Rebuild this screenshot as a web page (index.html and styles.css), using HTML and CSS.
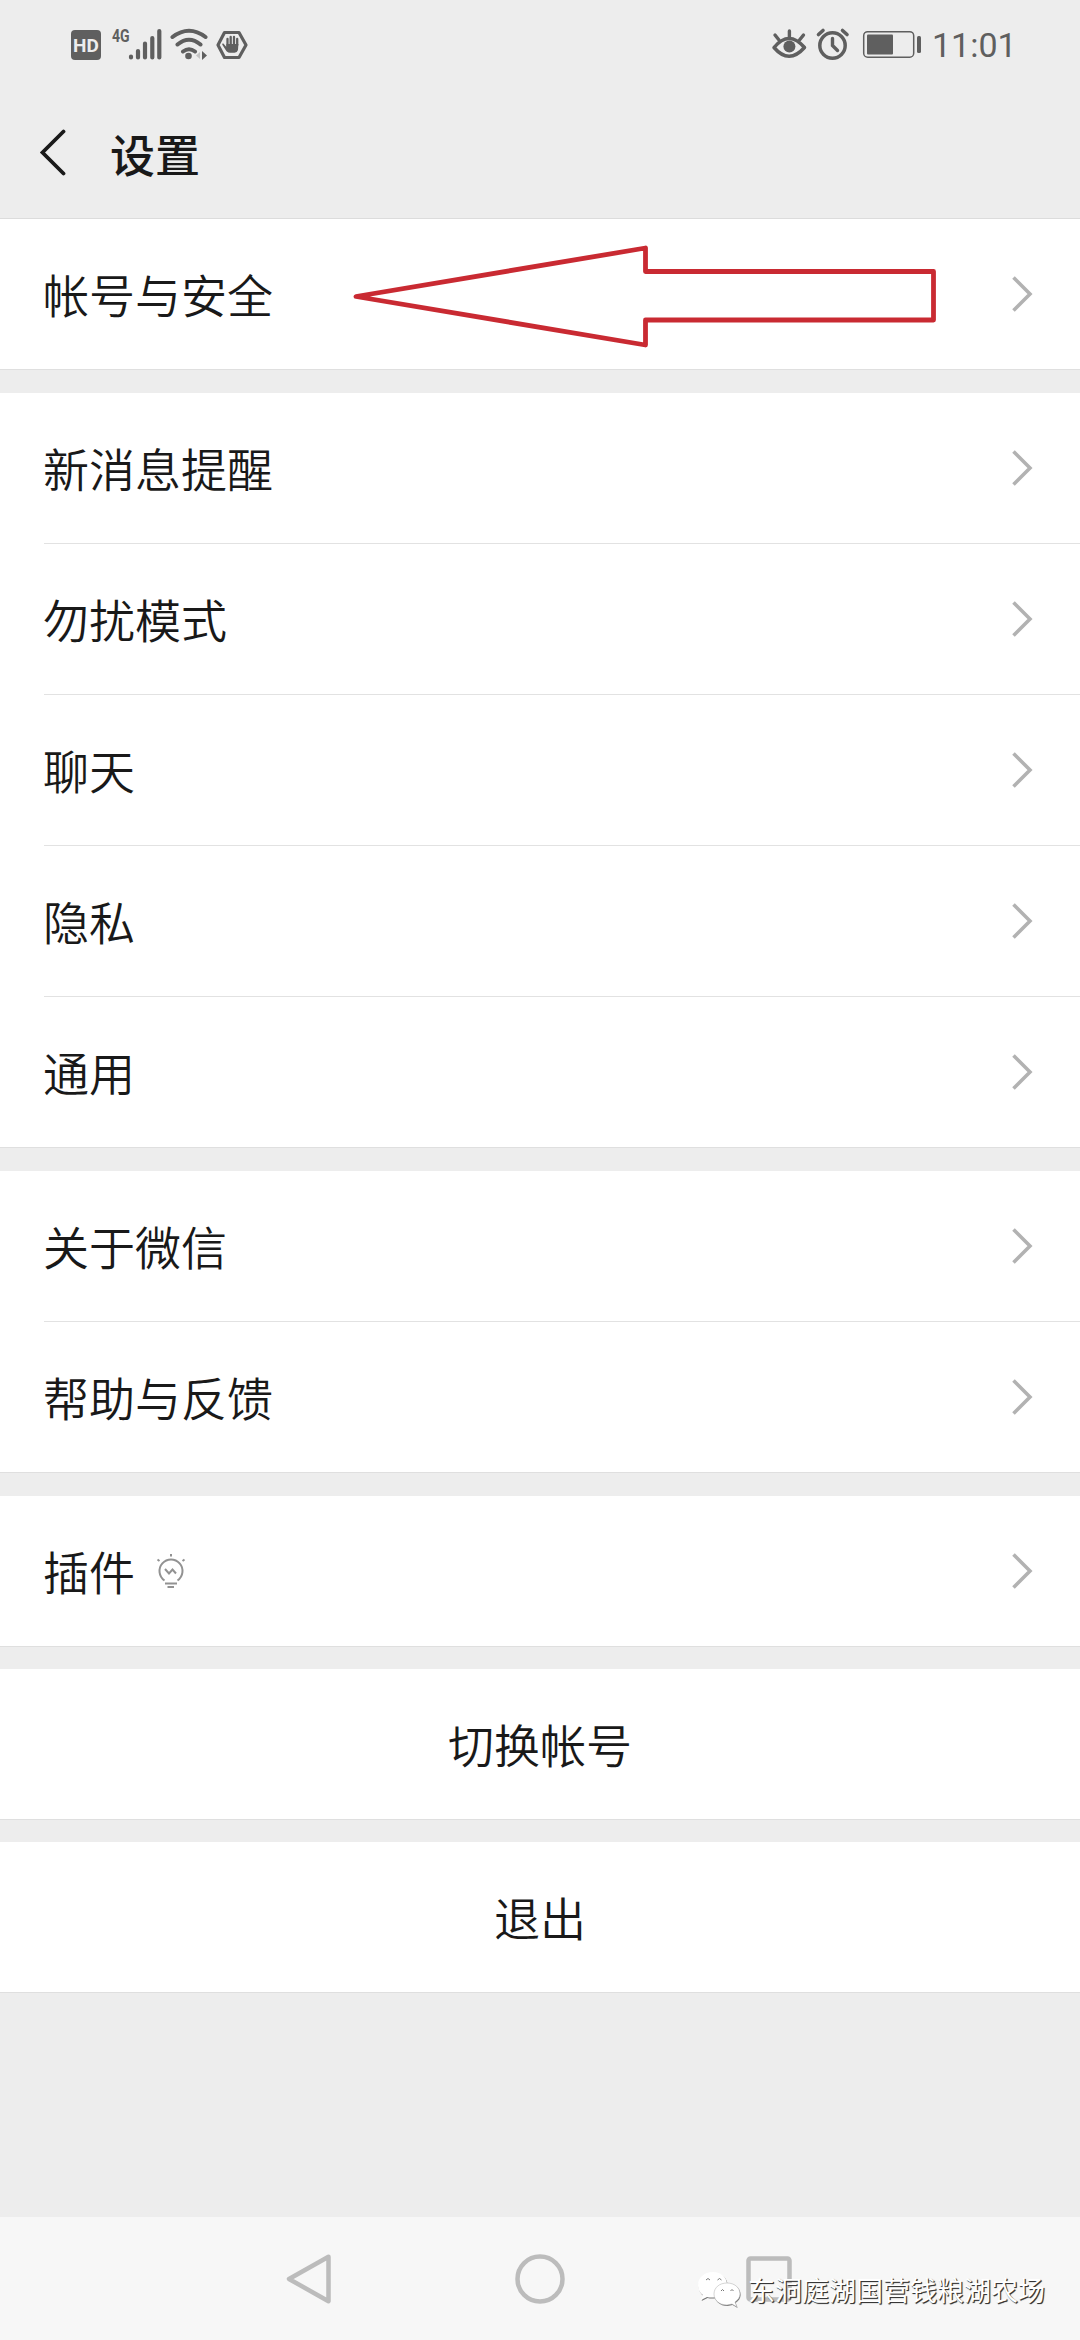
FILE: index.html
```html
<!DOCTYPE html>
<html lang="zh-CN">

<head>
    <meta charset="UTF-8">
    <meta name="viewport" content="width=device-width, initial-scale=1.0">
    <title>设置</title>
    <link rel="stylesheet" href="styles.css">
</head>

<body>
    <svg class="symbols" width="0" height="0">
        <symbol id="chevron" viewBox="0 0 22 38">
            <path d="M2.500 2.500L19 19L2.500 35.500" fill="none" stroke="#b2b2b2" stroke-width="3.600" />
        </symbol>
    </svg>

    <div class="screen">
        <div class="status_bar">
            <svg class="status_left" viewBox="0 0 180 40" fill="none" stroke="#5f5f5f">
                <rect x="1" y="5" width="30" height="30" rx="4" fill="#5f5f5f" stroke="none" />
                <text x="16" y="26.500" class="hd_text">HD</text>
                <text x="42" y="17.500" class="net_text">4G</text>
                <g stroke-width="4.200" stroke-linecap="round">
                    <path d="M61 31.500v1M68 26v6.500M75 18.500v14M82.300 13v19.500M89.300 6v26.500" />
                </g>
                <g stroke-width="4" stroke-linecap="round">
                    <path d="M102.500 12Q119 -0.500 135.500 12M107.500 19.500Q119 10 130.500 19.500M113 26.500Q119 22 125 26.500" />
                </g>
                <circle cx="118.500" cy="31" r="3.300" fill="#5f5f5f" stroke="none" />
                <path d="M132 26v9l5-4.500z" fill="#5f5f5f" stroke="none" />
                <path d="M130 27v7l-4-3.500z" fill="#c4c4c4" stroke="none" />
                <path d="M154.500 7.500h14.500l7 12.500l-7 12.500h-14.500l-6.500-12.500z" stroke-width="3.200" stroke-linejoin="round" />
                <path d="M157.500 22V14M160.700 20V12M164 20V12M167.200 20V14" stroke-width="2.300" stroke-linecap="round" />
                <path d="M156.400 19v3l-3-3.500q-1.600-.5-1.100 1.200l4.200 6.500q1.800 1.500 3.500 1.500h4.500q2.700 0 3.500-2.700l.400-6z" fill="#5f5f5f" stroke="none" />
            </svg>
            <div class="status_right">
                <svg class="status_icons" viewBox="0 0 152 40" fill="none" stroke="#5f5f5f">
                    <path d="M3 22.500Q18 4.500 33.500 22.500Q18 40 3 22.500z" stroke-width="3.500" stroke-linejoin="round" />
                    <circle cx="18.400" cy="21.500" r="6" fill="#5f5f5f" stroke="none" />
                    <path d="M18.400 6v6M4 10l4 5M32.500 10l-4 5" stroke-width="3.400" stroke-linecap="round" />
                    <circle cx="61.500" cy="20.500" r="12.700" stroke-width="3.500" />
                    <path d="M61.500 13.500v7l5 5" stroke-width="3.400" stroke-linecap="round" />
                    <path d="M47.500 9.500l4.500-4M71.500 5.500l4.500 4" stroke-width="3.600" stroke-linecap="round" />
                    <rect x="92.700" y="6.700" width="50" height="25.500" rx="4" stroke-width="1.500" />
                    <rect x="96" y="9.500" width="26" height="20" rx="1" fill="#5f5f5f" stroke="none" />
                    <rect x="146" y="11" width="4" height="17" rx="1.500" fill="#5f5f5f" stroke="none" />
                </svg>
                <span class="clock">11:01</span>
            </div>
        </div>

        <div class="header">
            <svg class="back" viewBox="0 0 28 48">
                <path d="M24.500 2.500L3.500 23.500L24.500 44.500" fill="none" stroke="#1a1a1a" stroke-width="3.800" stroke-linecap="round" />
            </svg>
            <h1>设置</h1>
        </div>

        <div class="group">
            <div class="row row_marked">
                <span>帐号与安全</span>
                <svg class="chevron"><use href="#chevron" /></svg>
                <svg class="red_arrow" viewBox="0 0 586 106">
                    <path d="M4 52.500L293.500 4V27.500H581.500V76H293.500V101z" fill="none" stroke="#c92a32" stroke-width="4.800" stroke-linejoin="round" />
                </svg>
            </div>
        </div>

        <div class="group">
            <div class="row"><span>新消息提醒</span><svg class="chevron"><use href="#chevron" /></svg></div>
            <div class="row"><span>勿扰模式</span><svg class="chevron"><use href="#chevron" /></svg></div>
            <div class="row"><span>聊天</span><svg class="chevron"><use href="#chevron" /></svg></div>
            <div class="row"><span>隐私</span><svg class="chevron"><use href="#chevron" /></svg></div>
            <div class="row"><span>通用</span><svg class="chevron"><use href="#chevron" /></svg></div>
        </div>

        <div class="group">
            <div class="row"><span>关于微信</span><svg class="chevron"><use href="#chevron" /></svg></div>
            <div class="row"><span>帮助与反馈</span><svg class="chevron"><use href="#chevron" /></svg></div>
        </div>

        <div class="group">
            <div class="row">
                <span>插件</span>
                <svg class="bulb" viewBox="0 0 30 36" fill="none" stroke="#929292" stroke-width="2">
                    <path d="M8.500 27.500A11.500 11.500 0 1 1 21.500 27.500" />
                    <path d="M9 16l4 4.500l3.500-4l3.500 4" />
                    <path d="M9 30.500h12M11.500 34h6.500M15 1v2.500M1.500 6.500l2 1.500M28.500 6.500l-2 1.500" />
                </svg>
                <svg class="chevron"><use href="#chevron" /></svg>
            </div>
        </div>

        <div class="group group_button">切换帐号</div>
        <div class="group group_button">退出</div>

        <div class="nav_bar">
            <svg viewBox="0 0 52 52"><path d="M44.500 3.800L5 26L44.500 48.200z" /></svg>
            <svg viewBox="0 0 52 52"><circle cx="26" cy="26" r="22.500" /></svg>
            <svg viewBox="0 0 52 52"><rect x="4.500" y="5.500" width="41" height="41" rx="2" /></svg>
            <div class="watermark">
                <svg class="wechat" viewBox="0 0 48 40">
                    <g class="bubble_shade">
                        <path d="M17 2C8 2 2 8 2 15c0 5 2 8 5 10l-2 5l6-3q4 1 9 0l11-10C32 8 26 2 17 2z" />
                        <path d="M31 13c-8 0-13 5-13 11s5 11 13 11l5-1l5 3l-2-5c3-2 5-5 5-8c0-6-5-11-13-11z" />
                    </g>
                    <g fill="#fff">
                        <path d="M17 2C8 2 2 8 2 15c0 5 2 8 5 10l-2 5l6-3q4 1 9 0l11-10C32 8 26 2 17 2z" />
                        <path class="bubble_front" d="M31 13c-8 0-13 5-13 11s5 11 13 11l5-1l5 3l-2-5c3-2 5-5 5-8c0-6-5-11-13-11z" />
                    </g>
                    <path d="M10 10q2-3 4 0M21.500 10q2-3 4 0M25 21q1.500-3 3 0M34.500 21q1.500-3 3 0" fill="none" stroke="#777" />
                </svg>
                <span>东洞庭湖国营钱粮湖农场</span>
            </div>
        </div>
    </div>
</body>

</html>
```
FILE: styles.css
```css
* {
    box-sizing: border-box;
}

body {
    margin: 0;
    background-color: #ededed;
    color: #191919;
    font-family: "Noto Sans CJK SC", sans-serif;
}

.symbols {
    position: absolute;
}

.screen {
    display: flex;
    flex-direction: column;
    width: 1080px;
    height: 2340px;
    overflow: hidden;
}

.status_bar {
    display: flex;
    justify-content: space-between;
    height: 90px;
    padding: 25px 68px 0 70px;
}

.status_left {
    width: 180px;
    height: 40px;
}

.hd_text {
    fill: #ededed;
    stroke: none;
    font: bold 19px Roboto, sans-serif;
    text-anchor: middle;
}

.net_text {
    fill: #5f5f5f;
    stroke: none;
    font: bold 18.5px Roboto, sans-serif;
    transform: scaleX(0.76);
    transform-origin: 42px 0;
}

.status_right {
    display: flex;
    height: 40px;
}

.status_icons {
    width: 152px;
    height: 40px;
}

.clock {
    width: 80px;
    margin-left: 9px;
    color: #5f5f5f;
    font: 34px/41px Roboto, sans-serif;
    white-space: nowrap;
}

.header {
    display: flex;
    align-items: center;
    height: 129px;
    padding: 0 39px;
    border-bottom: 1px solid #dcdcdc;
}

.back {
    width: 28px;
    height: 48px;
    margin-top: -2px;
}

.header h1 {
    margin: 0 0 0 43px;
    font-size: 45px;
    font-weight: 500;
    line-height: 66px;
}

.group {
    flex: none;
    padding-left: 44px;
    background-color: #fff;
    box-shadow: 0 1px 0 #dfdfdf;
}

.group + .group {
    margin-top: 24px;
}

.row {
    display: flex;
    align-items: center;
    height: 151px;
    padding-right: 47px;
    border-bottom: 1px solid #e2e2e2;
    font-size: 46px;
    font-weight: 350;
}

.row:last-child {
    height: 150px;
    border-bottom: none;
}

.row span {
    margin: -2px 0 0 -1px;
}

.row_marked {
    position: relative;
}

.chevron {
    width: 22px;
    height: 38px;
    margin-left: auto;
}

.red_arrow {
    position: absolute;
    left: 308px;
    top: 25px;
    width: 586px;
    height: 106px;
}

.bulb {
    width: 30px;
    height: 36px;
    margin-left: 21px;
}

.group_button {
    height: 150px;
    padding: 0;
    font-size: 46px;
    font-weight: 350;
    line-height: 148px;
    text-align: center;
}

.group + .group_button {
    margin-top: 23px;
}

.nav_bar {
    position: relative;
    display: flex;
    justify-content: center;
    gap: 178px;
    height: 123px;
    margin-top: auto;
    padding-top: 36px;
    background-color: #f7f7f7;
}

.nav_bar > svg {
    width: 52px;
    height: 52px;
    fill: none;
    stroke: #bcbcbc;
    stroke-width: 4.5;
    stroke-linejoin: round;
}

.watermark {
    position: absolute;
    left: 696px;
    top: 53px;
    display: flex;
    color: #fff;
    font-size: 27px;
    line-height: 40px;
    white-space: nowrap;
    text-shadow: 1px 1px 1px #333, 1px 1px 0 #555;
}

.wechat {
    width: 48px;
    height: 40px;
    margin-right: 4px;
}

.bubble_shade {
    fill: #777;
    transform: translate(0.6px, 0.9px);
}

.bubble_front {
    stroke: #aaa;
    stroke-width: 0.5;
}
```
